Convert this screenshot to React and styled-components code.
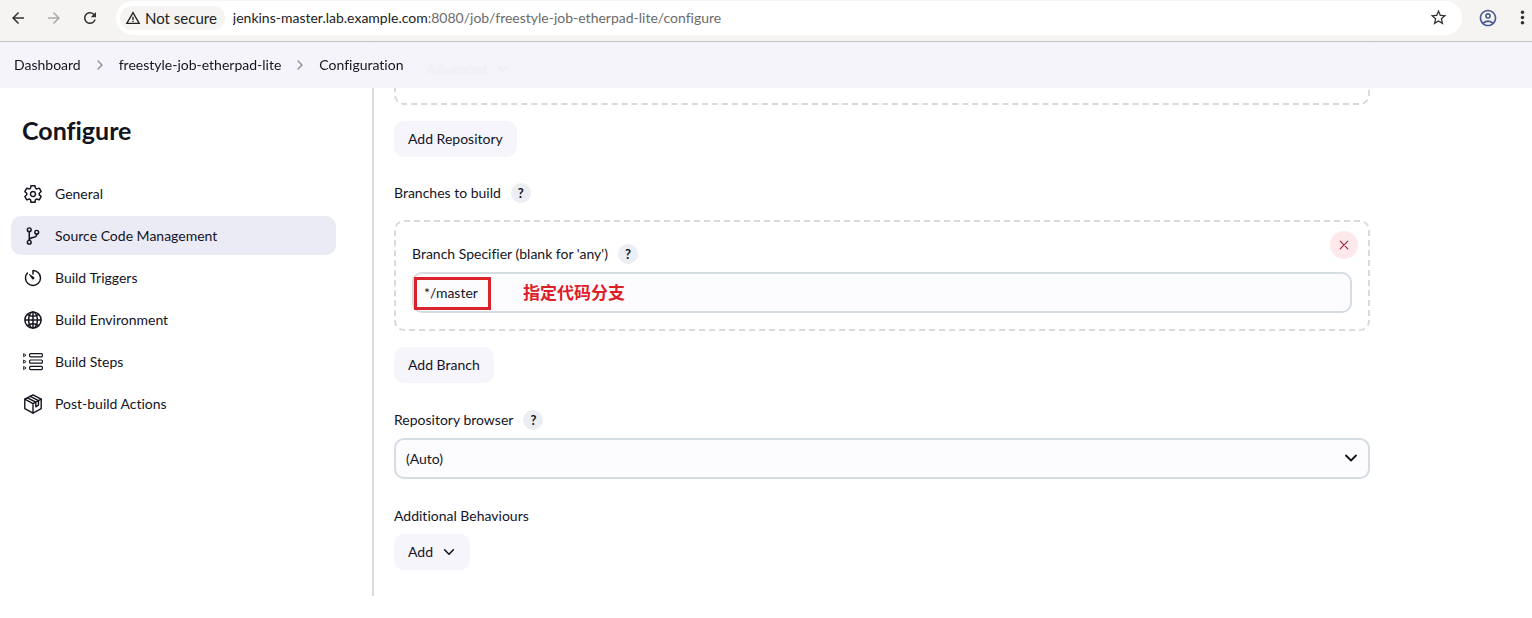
import React from "react";
import styled, { createGlobalStyle } from "styled-components";
import {
  MdArrowBack,
  MdArrowForward,
  MdRefresh,
  MdWarningAmber,
  MdStarOutline,
  MdOutlineAccountCircle,
  MdMoreVert,
} from "react-icons/md";
import {
  IoSettingsOutline,
  IoGitBranchOutline,
  IoTimerOutline,
  IoGlobeOutline,
  IoChevronForward,
} from "react-icons/io5";

const GlobalStyle = createGlobalStyle`
  *, *::before, *::after { box-sizing: border-box; }
  body {
    margin: 0;
    background: #fff;
    color: #14141f;
    font: 14px/20px Lato, "Noto Sans CJK SC", sans-serif;
    font-variant-ligatures: none;
  }
  button, input, select { font: inherit; color: inherit; font-variant-ligatures: none; }
  a { color: inherit; text-decoration: none; }
`;

/* Browser toolbar */
const Toolbar = styled.div`
  display: flex;
  align-items: center;
  height: 42px;
  padding: 0 0 6px 8px;
  background: #f5f4f2;
  border-bottom: 1px solid #c4c3c0;
`;
const ToolButton = styled.button`
  display: flex;
  align-items: center;
  justify-content: center;
  flex: none;
  width: 20px;
  height: 28px;
  margin-right: ${(p) => p.$gap || 0}px;
  padding: 0;
  border: 0;
  background: none;
  color: ${(p) => p.$color || "#333"};
  svg { flex: none; }
`;
const AddressBar = styled.div`
  display: flex;
  align-items: center;
  flex: 1;
  min-width: 0;
  height: 34px;
  margin-right: 16px;
  padding: 0 14px 0 4px;
  border-radius: 17px;
  background: #fff;
`;
const SecurityChip = styled.button`
  display: flex;
  align-items: center;
  gap: 4px;
  flex: none;
  height: 24px;
  margin-right: 8px;
  padding: 0 8px 0 5px;
  border: 0;
  border-radius: 12px;
  background: #f5f4f2;
  color: #222;
  font-size: 15px;
`;
const Url = styled.div`
  flex: 1;
  overflow: hidden;
  white-space: nowrap;
  color: #6b6b6b;
  span { color: #222; }
`;

/* Page frame */
const Breadcrumbs = styled.nav`
  position: sticky;
  top: 0;
  z-index: 1;
  display: flex;
  align-items: center;
  gap: 12px;
  height: 46px;
  padding: 0 14px;
  background: rgba(244, 244, 250, 0.96);
  backdrop-filter: blur(1px);
  svg { color: #8b8b95; }
`;
const Page = styled.div`
  display: flex;
  margin-top: -46px;
`;
const Sidebar = styled.aside`
  flex: none;
  width: 374px;
  padding: 72px 36px 0 11px;
  border-right: 2px solid #d7dade;
`;
const Title = styled.h1`
  margin: 0 0 28px 11px;
  font-size: 25px;
  line-height: 32px;
  font-weight: 700;
`;
const NavList = styled.ul`
  display: grid;
  gap: 3px;
  margin: 0;
  padding: 0;
  list-style: none;
`;
const NavLink = styled.a`
  display: flex;
  align-items: center;
  gap: 12px;
  height: 39px;
  padding: 0 12px;
  border-radius: 10px;
  background: ${(p) => (p.$active ? "#ebebf5" : "transparent")};
  svg { flex: none; width: 20px; height: 20px; }
  svg[viewBox="0 0 512 512"] [fill="none"] { stroke-width: 38px; }
`;

/* Form */
const Form = styled.form`
  flex: 1;
  min-width: 0;
  padding: 0 162px 26px 20px;
`;
const DashedBox = styled.section`
  position: relative;
  margin-bottom: 16px;
  padding: 22px 16px 16px;
  border: 2px dashed #d8dae0;
  border-radius: 10px;
`;
const RepositoryBox = styled(DashedBox)`
  padding: 9px 16px 16px;
  border-top: 0;
  border-radius: 0 0 10px 10px;
`;
const Button = styled.button`
  display: flex;
  align-items: center;
  gap: 9px;
  height: 36px;
  padding: 0 14px;
  border: 0;
  border-radius: 10px;
  background: #f6f5fb;
`;
const FieldHeading = styled.div`
  display: flex;
  align-items: center;
  gap: 10px;
  min-height: 20px;
  margin: ${(p) => p.$top || 0}px 0 ${(p) => p.$bottom || 8}px;
`;
const Help = styled.button`
  width: 20px;
  height: 20px;
  padding: 0;
  border: 0;
  border-radius: 50%;
  background: #ebeef2;
  font-size: 13px;
  line-height: 20px;
  font-weight: 700;
`;
const Remove = styled.button`
  position: absolute;
  top: 9px;
  right: 10px;
  display: flex;
  align-items: center;
  justify-content: center;
  width: 28px;
  height: 28px;
  padding: 0;
  border: 0;
  border-radius: 50%;
  background: #fde9ec;
  color: #9c1c3c;
`;
const Control = styled.div`
  position: relative;
`;
const TextInput = styled.input`
  display: block;
  width: 100%;
  height: 41px;
  padding: 0 10px;
  border: 2px solid #d5dce2;
  border-radius: 10px;
  background: #fcfcfe;
`;
const Select = styled(TextInput).attrs({ as: "select" })`
  appearance: none;
`;
const SelectArrow = styled.span`
  position: absolute;
  top: 13px;
  right: 12px;
  display: flex;
  pointer-events: none;
`;
const Highlight = styled.span`
  position: absolute;
  top: 5px;
  left: 2px;
  width: 77px;
  height: 33px;
  border: 3px solid #d9222a;
  pointer-events: none;
`;
const Note = styled.strong`
  position: absolute;
  top: 8px;
  left: 111px;
  color: #dc2028;
  font-family: "Noto Sans CJK SC", sans-serif;
  font-size: 17px;
  line-height: 24px;
  pointer-events: none;
`;

const StepsIcon = () => (
  <svg viewBox="0 0 20 20" fill="none" stroke="currentColor" strokeWidth="1.2" strokeLinejoin="round">
    <rect x="6.6" y="1.6" width="12.8" height="3.2" rx="1" />
    <rect x="6.6" y="8" width="12.8" height="3.2" rx="1" />
    <rect x="6.6" y="14.4" width="12.8" height="3.2" rx="1" />
    <path strokeWidth="0.9" d="M.6 1.6v3.2l2.5-1.6zM.6 8v3.2l2.5-1.6zM.6 14.4v3.2l2.5-1.6z" />
  </svg>
);

const PackageIcon = () => (
  <svg viewBox="0 0 20 20" fill="none" stroke="currentColor" strokeWidth="1.4" strokeLinejoin="round" strokeLinecap="round">
    <path d="M10 .9l8.2 4.3v9.4L10 19.1l-8.2-4.5V5.2z" />
    <path d="M1.8 5.2L10 9.6l8.2-4.4M10 9.6v9.5M4.5 3.8l8.3 4.3v4.7l2.7-1.7V6.6L7.3 2.3" />
  </svg>
);

const ChevronDown = ({ viewBox = "-1 -1 16 16" }) => (
  <svg width="14" height="14" viewBox={viewBox} fill="none" stroke="currentColor" strokeWidth="1.8" strokeLinecap="round" strokeLinejoin="round">
    <path d="M2 4.5l5 5 5-5" />
  </svg>
);

const CloseIcon = () => (
  <svg width="10" height="10" viewBox="0 0 10 10" stroke="currentColor" strokeWidth="1.1" strokeLinecap="round">
    <path d="M1.2 1.2l7.6 7.6M8.8 1.2L1.2 8.8" />
  </svg>
);

const sections = [
  { label: "General", Icon: IoSettingsOutline },
  { label: "Source Code Management", Icon: IoGitBranchOutline, active: true },
  { label: "Build Triggers", Icon: IoTimerOutline },
  { label: "Build Environment", Icon: IoGlobeOutline },
  { label: "Build Steps", Icon: StepsIcon },
  { label: "Post-build Actions", Icon: PackageIcon },
];

export default function App() {
  return (
    <>
      <GlobalStyle />
      <Toolbar>
        <ToolButton $gap={16} aria-label="Back"><MdArrowBack size={18} /></ToolButton>
        <ToolButton $gap={16} $color="#aaa" aria-label="Forward"><MdArrowForward size={18} /></ToolButton>
        <ToolButton $gap={16} aria-label="Reload"><MdRefresh size={18} /></ToolButton>
        <AddressBar>
          <SecurityChip><MdWarningAmber size={16} />Not secure</SecurityChip>
          <Url><span>jenkins-master.lab.example.com</span>:8080/job/freestyle-job-etherpad-lite/configure</Url>
          <ToolButton aria-label="Bookmark"><MdStarOutline size={19} /></ToolButton>
        </AddressBar>
        <ToolButton $gap={14} $color="#475d92" aria-label="Profile"><MdOutlineAccountCircle size={20} /></ToolButton>
        <ToolButton aria-label="Menu"><MdMoreVert size={21} /></ToolButton>
      </Toolbar>
      <Breadcrumbs aria-label="Breadcrumb">
        <a href="#dashboard">Dashboard</a>
        <IoChevronForward size={14} />
        <a href="#job">freestyle-job-etherpad-lite</a>
        <IoChevronForward size={14} />
        <a href="#configuration">Configuration</a>
      </Breadcrumbs>
      <Page>
        <Sidebar>
          <Title>Configure</Title>
          <NavList>
            {sections.map(({ label, Icon, active }) => (
              <li key={label}>
                <NavLink href="#section" $active={active}><Icon />{label}</NavLink>
              </li>
            ))}
          </NavList>
        </Sidebar>
        <Form>
          <RepositoryBox>
            <Button type="button">Advanced<ChevronDown /></Button>
          </RepositoryBox>
          <Button type="button">Add Repository</Button>
          <FieldHeading $top={26} $bottom={17}>
            <span>Branches to build</span>
            <Help type="button" aria-label="Help for branches to build">?</Help>
          </FieldHeading>
          <DashedBox>
            <Remove type="button" aria-label="Remove branch"><CloseIcon /></Remove>
            <FieldHeading>
              <label htmlFor="branch">Branch Specifier (blank for 'any')</label>
              <Help type="button" aria-label="Help for branch specifier">?</Help>
            </FieldHeading>
            <Control>
              <TextInput id="branch" defaultValue="*/master" />
              <Highlight />
              <Note>指定代码分支</Note>
            </Control>
          </DashedBox>
          <Button type="button">Add Branch</Button>
          <FieldHeading $top={27}>
            <label htmlFor="browser">Repository browser</label>
            <Help type="button" aria-label="Help for repository browser">?</Help>
          </FieldHeading>
          <Control>
            <Select id="browser"><option>(Auto)</option></Select>
            <SelectArrow><ChevronDown viewBox="0 0 14 14" /></SelectArrow>
          </Control>
          <FieldHeading $top={27}>Additional Behaviours</FieldHeading>
          <Button type="button">Add<ChevronDown /></Button>
        </Form>
      </Page>
    </>
  );
}
